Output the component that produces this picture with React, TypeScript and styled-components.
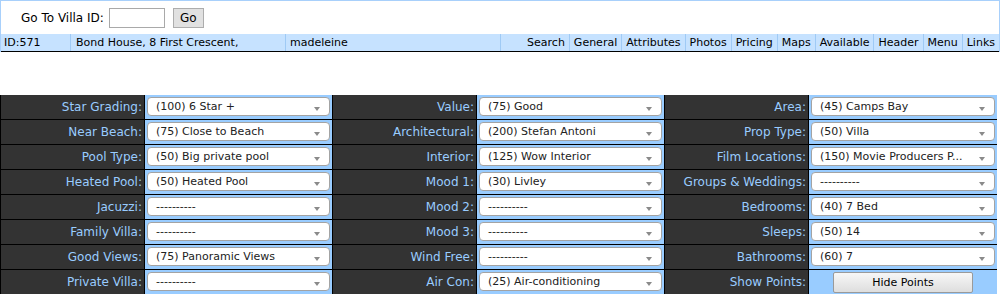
import React from "react";
import styled, { createGlobalStyle } from "styled-components";

const GlobalStyle = createGlobalStyle`
  html, body { margin: 0; padding: 0; background: #ffffff; }
  body { font-family: "DejaVu Sans", Verdana, sans-serif; color: #000; }
`;

const Header = styled.div`
  border: 1px solid #a8d0fb;
  border-bottom: none;
`;

const GoRow = styled.div`
  display: flex;
  align-items: center;
  height: 33px;
  padding-left: 20px;
  font-size: 12px;
`;

const GoLabel = styled.span`
  margin-right: 5px;
`;

const IdInput = styled.input`
  box-sizing: border-box;
  width: 56px;
  height: 20px;
  border: 1px solid #a9a9a9;
  padding: 0 2px;
  margin: 0 8px 0 0;
  font: inherit;
`;

const GoButton = styled.button`
  box-sizing: border-box;
  width: 31px;
  height: 20px;
  margin-top: 1px;
  padding: 0;
  border: 1px solid #adadad;
  background: #e1e1e1;
  font-family: "DejaVu Sans", Verdana, sans-serif;
  font-size: 12px;
  color: #000;
`;

const NavRow = styled.div`
  display: flex;
  height: 17px;
  line-height: 17px;
  background: #c6e2ff;
  border-bottom: 1px solid #000;
  font-size: 11px;
  white-space: nowrap;
`;

const NavCell = styled.div<{ $w: number; $pl?: number }>`
  width: ${(p) => p.$w}px;
  padding-left: ${(p) => p.$pl ?? 4}px;
  box-sizing: border-box;
  border-right: 1px solid #9fcaf5;
  overflow: hidden;
`;

const Spacer = styled.div`
  flex: 1;
`;

const NavLink = styled.div`
  padding: 0 4px;
  border-left: 1px solid #9fcaf5;
`;

const Links = styled.div`
  display: flex;
  & > div:first-child { border-left: none; }
`;

const Grid = styled.div`
  margin-top: 43px;
  display: grid;
  grid-template-columns: 143px 187px 143px 187px 143px 188px;
  grid-auto-rows: 24px;
  gap: 1px;
  width: max-content;
  background: #000;
  border-left: 1px solid #000;
`;

const LabelCell = styled.div`
  background: #333333;
  color: #99ccff;
  font-size: 12px;
  text-align: right;
  padding-right: 2px;
  line-height: 24px;
  white-space: nowrap;
  overflow: hidden;
`;

const FieldCell = styled.div<{ $center?: boolean }>`
  background: #99ccff;
  padding: 2px 2px 0 2px;
  box-sizing: border-box;
  display: flex;
  justify-content: ${(p) => (p.$center ? "center" : "stretch")};
`;

const SelectBox = styled.div`
  box-sizing: border-box;
  flex: 1;
  height: 19px;
  background: #fff;
  border: 1px solid #a3a3a3;
  border-radius: 4px;
  display: flex;
  align-items: center;
  justify-content: space-between;
  padding: 0 9px 0 8px;
  font-size: 11px;
  color: #222;
  white-space: nowrap;
  overflow: hidden;
`;

const Arrow = styled.span`
  width: 0;
  height: 0;
  margin-top: 4px;
  border-left: 3px solid transparent;
  border-right: 3px solid transparent;
  border-top: 4px solid #8a8a8a;
  flex: none;
`;

const PointsButton = styled.button`
  box-sizing: border-box;
  width: 140px;
  height: 21px;
  margin-top: 0;
  padding: 0;
  border: 1px solid #9a9a9a;
  border-radius: 2px;
  background: linear-gradient(#f7f7f7, #dedede);
  font-family: "DejaVu Sans", Verdana, sans-serif;
  font-size: 11px;
  color: #000;
`;

type Field = { label: string; value?: string; button?: string };

const rows: Field[][] = [
  [
    { label: "Star Grading:", value: "(100) 6 Star +" },
    { label: "Value:", value: "(75) Good" },
    { label: "Area:", value: "(45) Camps Bay" },
  ],
  [
    { label: "Near Beach:", value: "(75) Close to Beach" },
    { label: "Architectural:", value: "(200) Stefan Antoni" },
    { label: "Prop Type:", value: "(50) Villa" },
  ],
  [
    { label: "Pool Type:", value: "(50) Big private pool" },
    { label: "Interior:", value: "(125) Wow Interior" },
    { label: "Film Locations:", value: "(150) Movie Producers P..." },
  ],
  [
    { label: "Heated Pool:", value: "(50) Heated Pool" },
    { label: "Mood 1:", value: "(30) Livley" },
    { label: "Groups & Weddings:", value: "----------" },
  ],
  [
    { label: "Jacuzzi:", value: "----------" },
    { label: "Mood 2:", value: "----------" },
    { label: "Bedrooms:", value: "(40) 7 Bed" },
  ],
  [
    { label: "Family Villa:", value: "----------" },
    { label: "Mood 3:", value: "----------" },
    { label: "Sleeps:", value: "(50) 14" },
  ],
  [
    { label: "Good Views:", value: "(75) Panoramic Views" },
    { label: "Wind Free:", value: "----------" },
    { label: "Bathrooms:", value: "(60) 7" },
  ],
  [
    { label: "Private Villa:", value: "----------" },
    { label: "Air Con:", value: "(25) Air-conditioning" },
    { label: "Show Points:", button: "Hide Points" },
  ],
];

const navLinks = [
  "Search",
  "General",
  "Attributes",
  "Photos",
  "Pricing",
  "Maps",
  "Available",
  "Header",
  "Menu",
  "Links",
];

export default function App() {
  return (
    <>
      <GlobalStyle />
      <Header>
        <GoRow>
          <GoLabel>Go To Villa ID:</GoLabel>
          <IdInput type="text" />
          <GoButton>Go</GoButton>
        </GoRow>
        <NavRow>
          <NavCell $w={70} $pl={3}>ID:571</NavCell>
          <NavCell $w={215} $pl={5}>Bond House, 8 First Crescent,</NavCell>
          <NavCell $w={215} $pl={4}>madeleine</NavCell>
          <Spacer />
          <Links>
            {navLinks.map((l) => (
              <NavLink key={l}>{l}</NavLink>
            ))}
          </Links>
        </NavRow>
      </Header>
      <Grid>
        {rows.map((row, i) =>
          row.map((f, j) => (
            <React.Fragment key={`${i}-${j}`}>
              <LabelCell>{f.label}</LabelCell>
              {f.button ? (
                <FieldCell $center>
                  <PointsButton>{f.button}</PointsButton>
                </FieldCell>
              ) : (
                <FieldCell>
                  <SelectBox>
                    <span>{f.value}</span>
                    <Arrow />
                  </SelectBox>
                </FieldCell>
              )}
            </React.Fragment>
          ))
        )}
      </Grid>
    </>
  );
}
